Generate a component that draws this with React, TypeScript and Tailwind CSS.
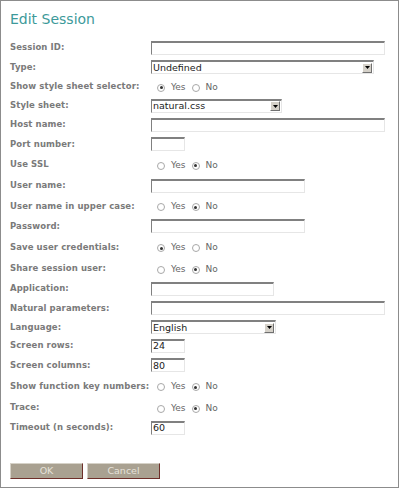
const font = { fontFamily: '"DejaVu Sans", Verdana, sans-serif' };

type Field =
  | { label: string; kind: "text"; width: number; value?: string; h: number }
  | { label: string; kind: "select"; width: number; value: string; h: number }
  | { label: string; kind: "radio"; yes: boolean; h: number };

const fields: Field[] = [
  { label: "Session ID:", kind: "text", width: 234, h: 19 },
  { label: "Type:", kind: "select", width: 223, value: "Undefined", h: 20 },
  { label: "Show style sheet selector:", kind: "radio", yes: true, h: 19 },
  { label: "Style sheet:", kind: "select", width: 131, value: "natural.css", h: 19 },
  { label: "Host name:", kind: "text", width: 234, h: 19 },
  { label: "Port number:", kind: "text", width: 34, h: 20 },
  { label: "Use SSL", kind: "radio", yes: false, h: 21 },
  { label: "User name:", kind: "text", width: 154, h: 21 },
  { label: "User name in upper case:", kind: "radio", yes: false, h: 20 },
  { label: "Password:", kind: "text", width: 154, h: 20 },
  { label: "Save user credentials:", kind: "radio", yes: true, h: 22 },
  { label: "Share session user:", kind: "radio", yes: false, h: 21 },
  { label: "Application:", kind: "text", width: 123, h: 19 },
  { label: "Natural parameters:", kind: "text", width: 234, h: 20 },
  { label: "Language:", kind: "select", width: 125, value: "English", h: 18 },
  { label: "Screen rows:", kind: "text", width: 34, value: "24", h: 19 },
  { label: "Screen columns:", kind: "text", width: 34, value: "80", h: 20 },
  { label: "Show function key numbers:", kind: "radio", yes: false, h: 22 },
  { label: "Trace:", kind: "radio", yes: false, h: 21 },
  { label: "Timeout (n seconds):", kind: "text", width: 34, value: "60", h: 19 },
];

function Radio({ checked }: { checked: boolean }) {
  return (
    <span className="flex h-[8px] w-[8px] items-center justify-center rounded-full border border-[#a8a8a8] bg-white">
      {checked && <span className="h-[3px] w-[3px] rounded-full bg-[#333]" />}
    </span>
  );
}

function TextBox({ width, value }: { width: number; value?: string }) {
  return (
    <div
      className="flex h-[14px] items-center border-t-2 border-l border-b border-r border-t-[#808080] border-l-[#808080] border-b-[#e6e6e6] border-r-[#e6e6e6] bg-white pl-[1px] text-[9.5px] leading-none text-[#222]"
      style={{ width }}
    >
      {value}
    </div>
  );
}

function SelectBox({ width, value }: { width: number; value: string }) {
  return (
    <div
      className="flex h-[14px] items-center justify-between border-t-2 border-l border-b border-r border-t-[#808080] border-l-[#808080] border-b-[#e6e6e6] border-r-[#e6e6e6] bg-white pl-[1px] text-[9.5px] leading-none text-[#222]"
      style={{ width }}
    >
      <span>{value}</span>
      <span className="mr-[1px] flex h-[10px] w-[10px] items-center justify-center border border-t-white border-l-white border-b-[#707070] border-r-[#707070] bg-[#d4d0c8]">
        <svg width="5" height="3" viewBox="0 0 5 3">
          <path d="M0 0h5L2.5 3z" fill="#000" />
        </svg>
      </span>
    </div>
  );
}

export default function App() {
  return (
    <div style={font} className="h-[489px] w-[400px] bg-white">
      <div className="flex h-[488px] w-[399px] flex-col border border-[#8c8c8c] pl-[9px]">
        <h1 className="mt-[8px] h-[29px] text-[14px] leading-[20px] text-[#3d9a9a]">Edit Session</h1>
        <div className="flex flex-col">
          {fields.map((f) => (
            <div key={f.label} className="flex items-center" style={{ height: f.h }}>
              <div className="w-[141px] shrink-0 whitespace-nowrap text-[8.5px] font-bold tracking-[0.1px] text-[#7a7a7a]">
                {f.label}
              </div>
              {f.kind === "text" && <TextBox width={f.width} value={f.value} />}
              {f.kind === "select" && <SelectBox width={f.width} value={f.value} />}
              {f.kind === "radio" && (
                <div className="flex items-center pl-[6px] pt-[2px] text-[9px] text-[#666]">
                  <Radio checked={f.yes} />
                  <span className="ml-[6px] mr-[6px]">Yes</span>
                  <Radio checked={!f.yes} />
                  <span className="ml-[6px]">No</span>
                </div>
              )}
            </div>
          ))}
        </div>
        <div className="mt-[26px] flex gap-[4px]">
          {["OK", "Cancel"].map((b) => (
            <button
              key={b}
              type="button"
              className="h-[16px] w-[73px] border border-t-[#d6d2c8] border-l-[#d6d2c8] border-b-[#6e2f2a] border-r-[#6e2f2a] bg-[#a9a191] text-[9.5px] leading-none text-[#e6e2da]"
            >
              {b}
            </button>
          ))}
        </div>
      </div>
    </div>
  );
}
